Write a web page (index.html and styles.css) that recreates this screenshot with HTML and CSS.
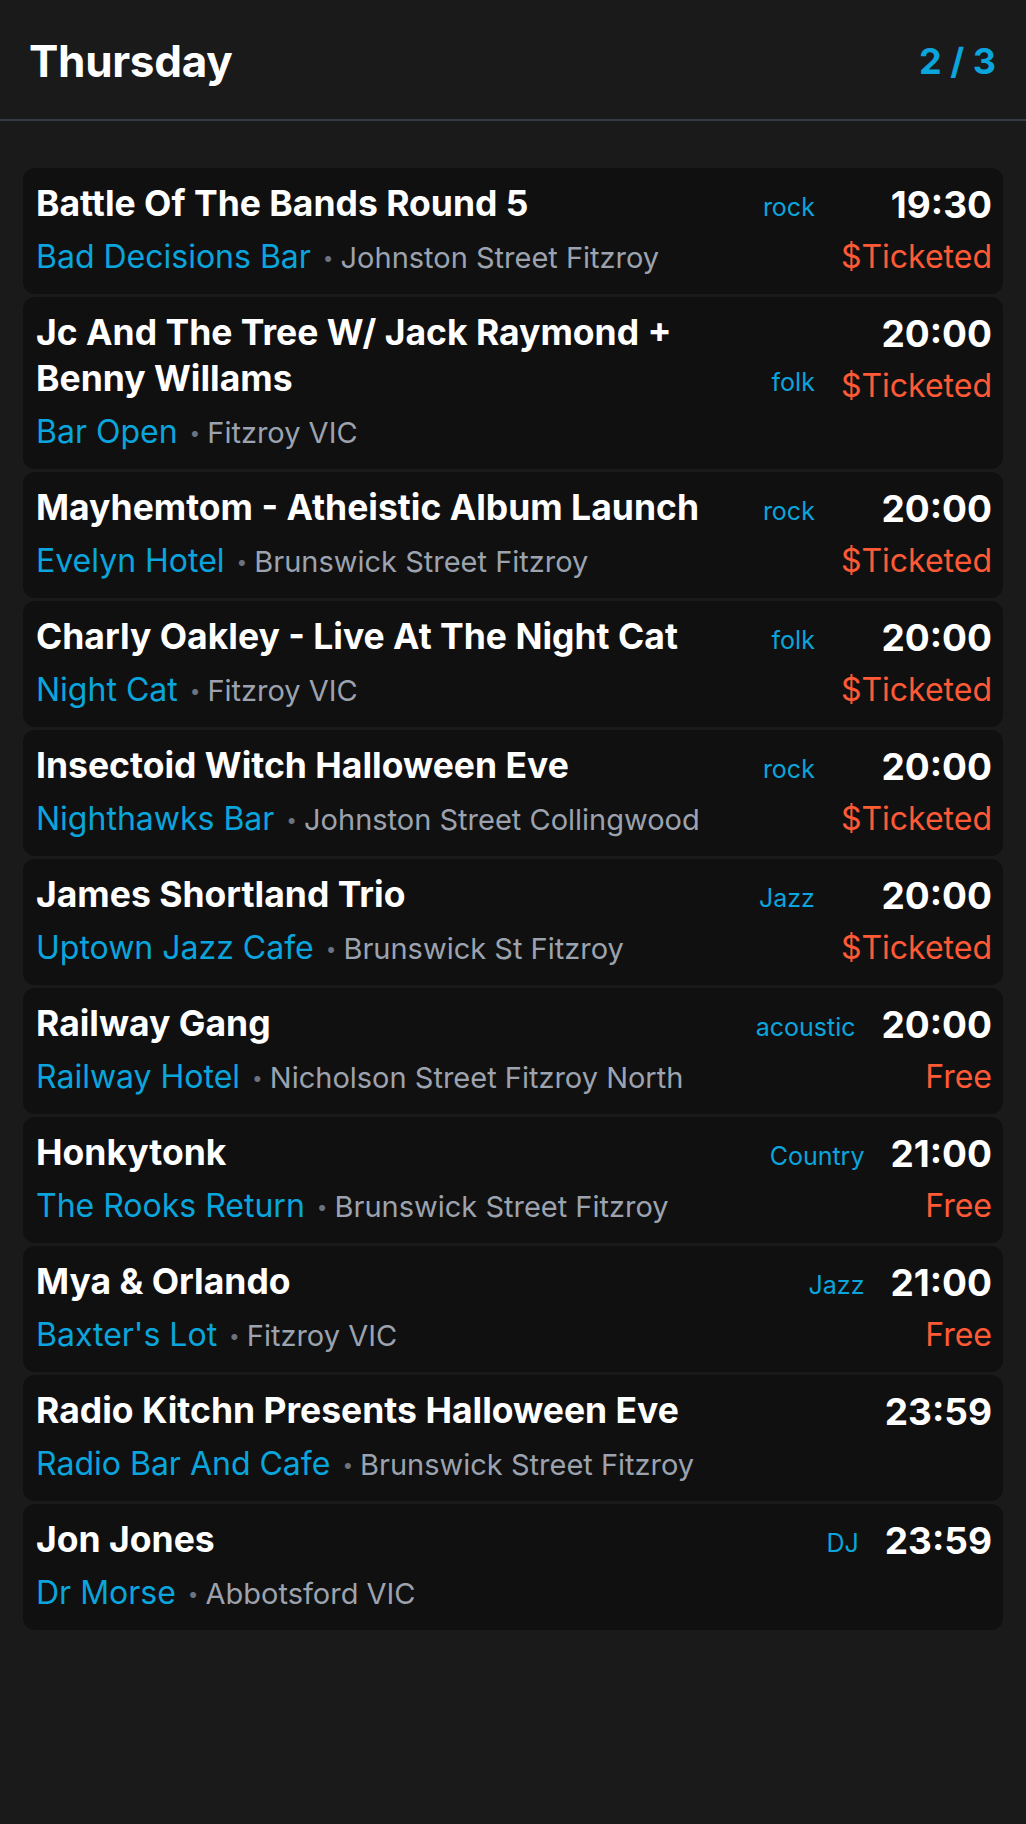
FILE: index.html
```html
<!DOCTYPE html>
<html lang="en">
<head>
<meta charset="utf-8">
<title>Thursday</title>
<link rel="stylesheet" href="styles.css">
</head>
<body>
<header class="header">
  <h1 class="day">Thursday</h1>
  <div class="page">2 / 3</div>
</header>
<main class="list">
  <div class="card">
    <div class="main">
      <div class="top"><div class="title">Battle Of The Bands Round 5</div><span class="genre">rock</span></div>
      <div class="where"><span class="venue">Bad Decisions Bar</span><span class="sep">•</span><span class="addr">Johnston Street Fitzroy</span></div>
    </div>
    <div class="side"><div class="time">19:30</div><div class="price">$Ticketed</div></div>
  </div>
  <div class="card">
    <div class="main">
      <div class="top"><div class="title">Jc And The Tree W/ Jack Raymond + Benny Willams</div><span class="genre">folk</span></div>
      <div class="where"><span class="venue">Bar Open</span><span class="sep">•</span><span class="addr">Fitzroy VIC</span></div>
    </div>
    <div class="side"><div class="time">20:00</div><div class="price">$Ticketed</div></div>
  </div>
  <div class="card">
    <div class="main">
      <div class="top"><div class="title">Mayhemtom - Atheistic Album Launch</div><span class="genre">rock</span></div>
      <div class="where"><span class="venue">Evelyn Hotel</span><span class="sep">•</span><span class="addr">Brunswick Street Fitzroy</span></div>
    </div>
    <div class="side"><div class="time">20:00</div><div class="price">$Ticketed</div></div>
  </div>
  <div class="card">
    <div class="main">
      <div class="top"><div class="title">Charly Oakley - Live At The Night Cat</div><span class="genre">folk</span></div>
      <div class="where"><span class="venue">Night Cat</span><span class="sep">•</span><span class="addr">Fitzroy VIC</span></div>
    </div>
    <div class="side"><div class="time">20:00</div><div class="price">$Ticketed</div></div>
  </div>
  <div class="card">
    <div class="main">
      <div class="top"><div class="title">Insectoid Witch Halloween Eve</div><span class="genre">rock</span></div>
      <div class="where"><span class="venue">Nighthawks Bar</span><span class="sep">•</span><span class="addr">Johnston Street Collingwood</span></div>
    </div>
    <div class="side"><div class="time">20:00</div><div class="price">$Ticketed</div></div>
  </div>
  <div class="card">
    <div class="main">
      <div class="top"><div class="title">James Shortland Trio</div><span class="genre">Jazz</span></div>
      <div class="where"><span class="venue">Uptown Jazz Cafe</span><span class="sep">•</span><span class="addr">Brunswick St Fitzroy</span></div>
    </div>
    <div class="side"><div class="time">20:00</div><div class="price">$Ticketed</div></div>
  </div>
  <div class="card">
    <div class="main">
      <div class="top"><div class="title">Railway Gang</div><span class="genre">acoustic</span></div>
      <div class="where"><span class="venue">Railway Hotel</span><span class="sep">•</span><span class="addr">Nicholson Street Fitzroy North</span></div>
    </div>
    <div class="side"><div class="time">20:00</div><div class="price">Free</div></div>
  </div>
  <div class="card">
    <div class="main">
      <div class="top"><div class="title">Honkytonk</div><span class="genre">Country</span></div>
      <div class="where"><span class="venue">The Rooks Return</span><span class="sep">•</span><span class="addr">Brunswick Street Fitzroy</span></div>
    </div>
    <div class="side"><div class="time">21:00</div><div class="price">Free</div></div>
  </div>
  <div class="card">
    <div class="main">
      <div class="top"><div class="title">Mya &amp; Orlando</div><span class="genre">Jazz</span></div>
      <div class="where"><span class="venue">Baxter's Lot</span><span class="sep">•</span><span class="addr">Fitzroy VIC</span></div>
    </div>
    <div class="side"><div class="time">21:00</div><div class="price">Free</div></div>
  </div>
  <div class="card">
    <div class="main">
      <div class="top"><div class="title">Radio Kitchn Presents Halloween Eve</div></div>
      <div class="where"><span class="venue">Radio Bar And Cafe</span><span class="sep">•</span><span class="addr">Brunswick Street Fitzroy</span></div>
    </div>
    <div class="side"><div class="time">23:59</div></div>
  </div>
  <div class="card">
    <div class="main">
      <div class="top"><div class="title">Jon Jones</div><span class="genre">DJ</span></div>
      <div class="where"><span class="venue">Dr Morse</span><span class="sep">•</span><span class="addr">Abbotsford VIC</span></div>
    </div>
    <div class="side"><div class="time">23:59</div></div>
  </div>
</main>
</body>
</html>
```

FILE: styles.css
```css
* { box-sizing: border-box; }

body {
  margin: 0;
  background: #1a1a1a;
  color: #ffffff;
  font-family: Inter, "Noto Sans", "Liberation Sans", sans-serif;
}

.header {
  height: 121px;
  border-bottom: 2px solid #333a45;
  display: flex;
  align-items: center;
  justify-content: space-between;
  padding: 2px 30px 0 29px;
}

.day {
  margin: 0;
  font-size: 44px;
  font-weight: 700;
  letter-spacing: -0.3px;
}

.page {
  font-size: 36px;
  font-weight: 700;
  color: #0aa5dc;
}

.list {
  display: flex;
  flex-direction: column;
  gap: 3px;
  padding: 47px 23px;
}

.card {
  display: flex;
  gap: 26px;
  background: #101010;
  border-radius: 12px;
  padding: 13px 11px 17px 13px;
}

.main {
  flex: 1;
  min-width: 0;
}

.top {
  display: flex;
  align-items: last baseline;
  gap: 16px;
}

.title {
  flex: 1;
  font-size: 35.5px;
  font-weight: 700;
  line-height: 46px;
}

.genre {
  font-size: 25px;
  line-height: 30px;
  color: #0aa5dc;
}

.where {
  display: flex;
  align-items: baseline;
  height: 40px;
  margin-top: 10px;
  line-height: 40px;
  white-space: nowrap;
}

.venue {
  font-size: 32px;
  color: #0aa5dc;
}

.sep {
  color: #6b7280;
  font-size: 19px;
  margin: 0 7px 0 12px;
  position: relative;
  top: -3px;
}

.addr {
  font-size: 29px;
  color: #9ca3af;
}

.side {
  display: flex;
  flex-direction: column;
  align-items: flex-end;
}

.time {
  padding-top: 2px;
  height: 46px;
  font-size: 37px;
  font-weight: 700;
  line-height: 44px;
}

.price {
  margin-top: 10px;
  height: 40px;
  font-size: 32px;
  line-height: 40px;
  color: #ff5a36;
}
```
